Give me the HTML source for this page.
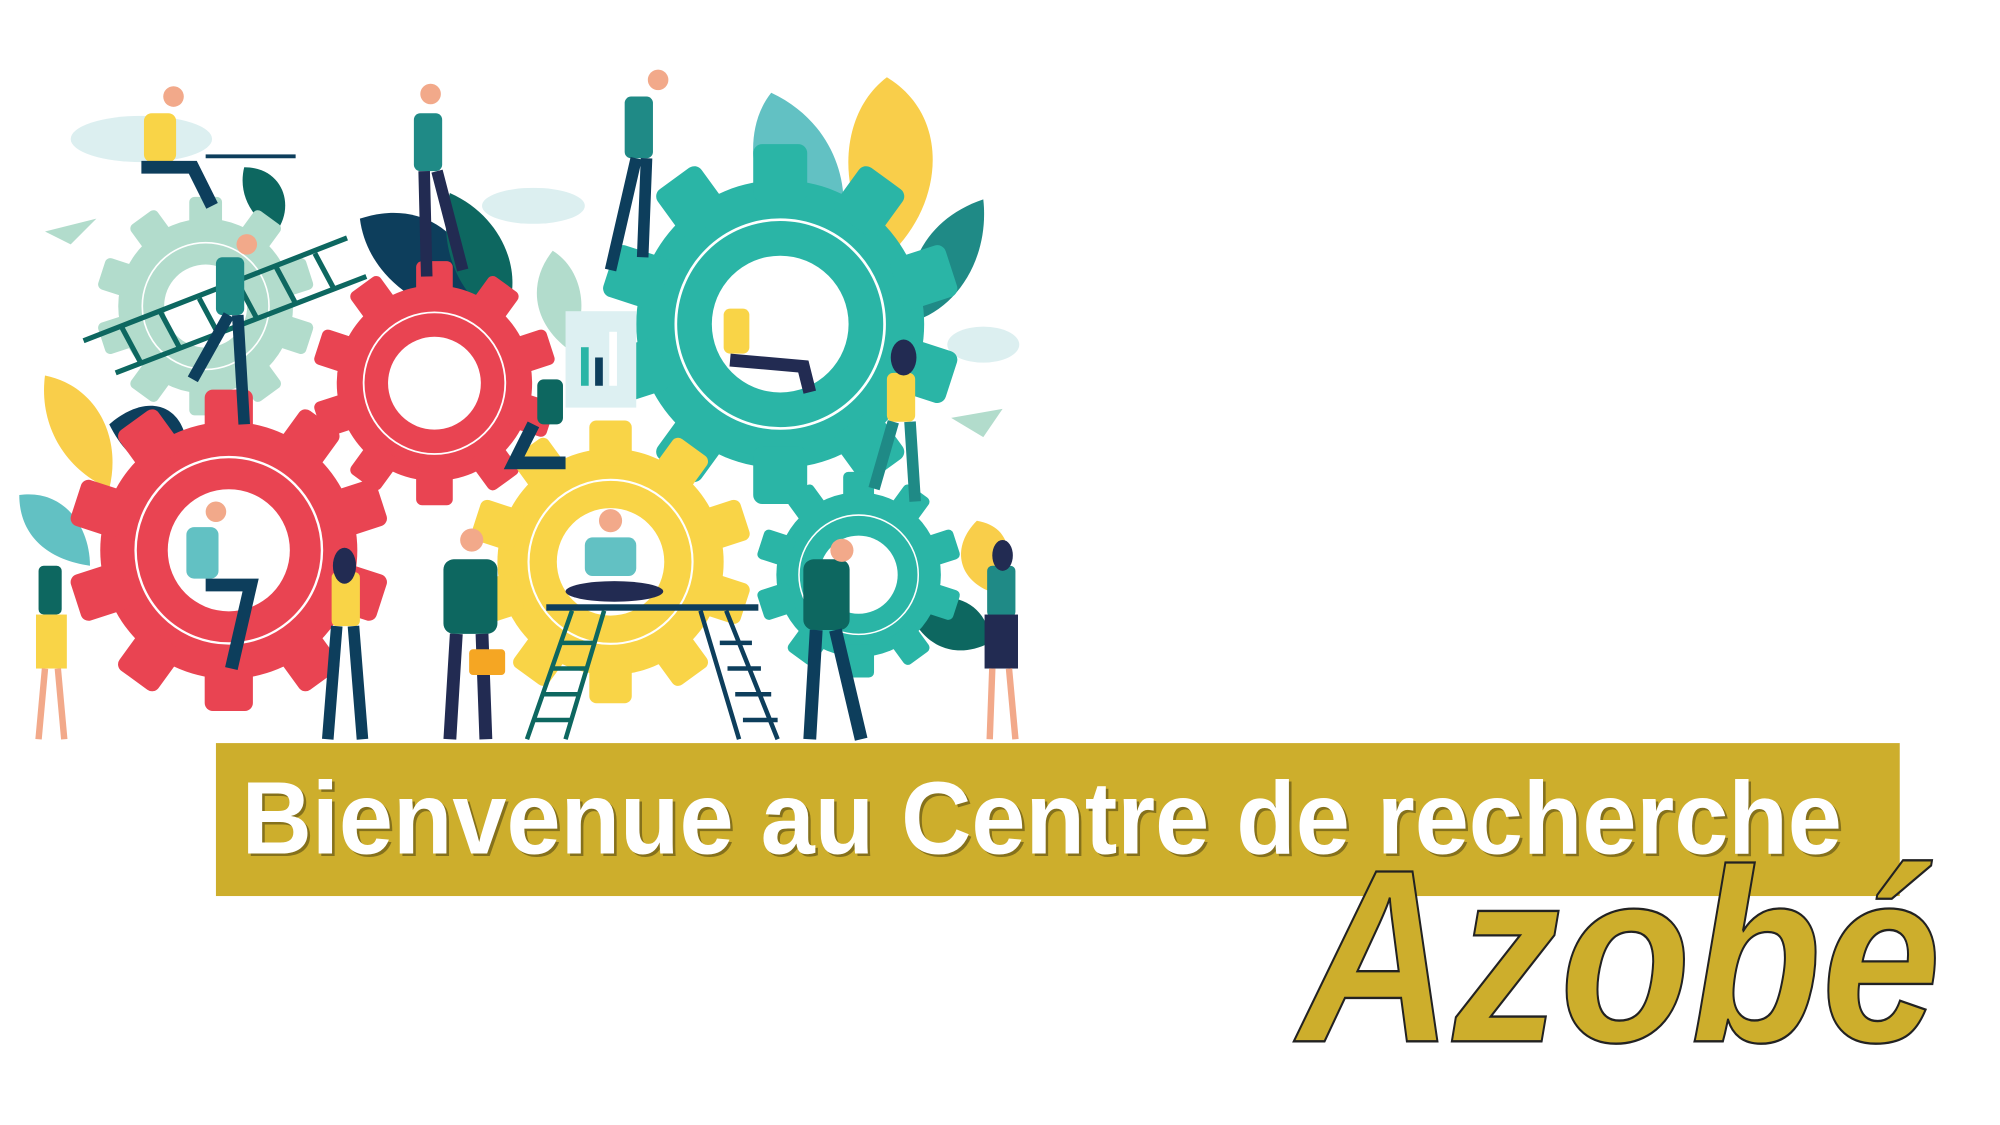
<!DOCTYPE html>
<html><head><meta charset="utf-8"><style>
html,body{margin:0;padding:0;background:#fff;width:2000px;height:1125px;overflow:hidden}
svg{display:block}
</style></head><body>
<svg width="2000" height="1125" viewBox="0 0 1556 875" xmlns="http://www.w3.org/2000/svg">
<defs>
<g id="g">
<circle r="80"/>
<rect x="-15" y="-100" width="30" height="32" rx="5"/>
<rect x="-15" y="-100" width="30" height="32" rx="5" transform="rotate(36)"/>
<rect x="-15" y="-100" width="30" height="32" rx="5" transform="rotate(72)"/>
<rect x="-15" y="-100" width="30" height="32" rx="5" transform="rotate(108)"/>
<rect x="-15" y="-100" width="30" height="32" rx="5" transform="rotate(144)"/>
<rect x="-15" y="-100" width="30" height="32" rx="5" transform="rotate(180)"/>
<rect x="-15" y="-100" width="30" height="32" rx="5" transform="rotate(216)"/>
<rect x="-15" y="-100" width="30" height="32" rx="5" transform="rotate(252)"/>
<rect x="-15" y="-100" width="30" height="32" rx="5" transform="rotate(288)"/>
<rect x="-15" y="-100" width="30" height="32" rx="5" transform="rotate(324)"/>
<circle r="58" fill="none" stroke="#fff" stroke-width="1.5"/>
<circle r="38" fill="#fff"/>
</g>
</defs>
<ellipse cx="110" cy="108" rx="55" ry="18" fill="#DCEFF0"/>
<ellipse cx="415" cy="160" rx="40" ry="14" fill="#DCEFF0"/>
<ellipse cx="765" cy="268" rx="28" ry="14" fill="#DCEFF0"/>
<path d="M690 60 C740 90 735 160 690 200 C650 160 650 90 690 60Z" fill="#F9CE4A"/>
<path d="M600 72 C660 100 670 170 640 210 C590 180 570 110 600 72Z" fill="#62C1C3"/>
<path d="M765 155 C770 200 745 240 710 250 C700 210 720 170 765 155Z" fill="#1F8A86"/>
<path d="M280 170 C340 150 380 200 370 250 C320 240 285 210 280 170Z" fill="#0D3E5C"/>
<path d="M350 150 C395 170 410 220 390 250 C355 230 340 190 350 150Z" fill="#0D6760"/>
<path d="M35 292 C75 300 95 340 85 380 C50 365 30 330 35 292Z" fill="#F9CE4A"/>
<path d="M15 385 C50 380 70 410 70 440 C35 435 15 415 15 385Z" fill="#62C1C3"/>
<path d="M85 330 C120 300 150 320 145 360 C120 370 100 360 85 330Z" fill="#0D3E5C"/>
<path d="M430 195 C455 210 460 250 440 270 C415 250 410 220 430 195Z" fill="#B2DCCC"/>
<path d="M760 405 C790 410 790 440 770 460 C745 450 740 425 760 405Z" fill="#F9CE4A"/>
<path d="M705 470 C740 455 770 470 770 500 C740 515 715 500 705 470Z" fill="#0D6760"/>
<path d="M190 130 C220 130 230 160 215 180 C195 170 185 150 190 130Z" fill="#0D6760"/>
<use href="#g" transform="translate(160,238) scale(0.85)" fill="#B2DCCC"/>
<use href="#g" transform="translate(338,298) scale(0.95)" fill="#E94452"/>
<use href="#g" transform="translate(607,252) scale(1.4)" fill="#2AB5A6"/>
<use href="#g" transform="translate(178,428) scale(1.25)" fill="#E94452"/>
<use href="#g" transform="translate(475,437) scale(1.1)" fill="#F9D447"/>
<use href="#g" transform="translate(668,447) scale(0.8)" fill="#2AB5A6"/>
<g stroke="#0D6760" stroke-width="4">
<line x1="65" y1="265" x2="270" y2="185"/><line x1="90" y1="290" x2="285" y2="215"/>
<line x1="95" y1="255" x2="110" y2="283"/><line x1="125" y1="243" x2="140" y2="271"/>
<line x1="155" y1="232" x2="170" y2="260"/><line x1="185" y1="220" x2="200" y2="248"/>
<line x1="215" y1="208" x2="230" y2="236"/><line x1="245" y1="197" x2="260" y2="225"/>
</g>
<rect x="440" y="242" width="55" height="75" fill="#DDF0F2"/>
<rect x="452" y="270" width="6" height="30" fill="#2AB5A6"/><rect x="463" y="278" width="6" height="22" fill="#0D3E5C"/><rect x="474" y="258" width="6" height="42" fill="#fff"/>
<rect x="425" y="470" width="165" height="5" fill="#0D3E5C"/>
<g stroke="#0D6760" stroke-width="3.5" fill="none">
<path d="M445 475 L410 575 M470 475 L440 575 M415 560 L445 560 M422 540 L450 540 M429 520 L456 520 M436 500 L462 500"/>
</g>
<g stroke="#0D3E5C" stroke-width="3.5" fill="none">
<path d="M545 475 L575 575 M565 475 L605 575 M560 500 L585 500 M566 520 L592 520 M572 540 L600 540 M578 560 L605 560"/>
</g>
<g>
<rect x="112" y="88" width="25" height="38" rx="6" fill="#F9D447"/><circle cx="135" cy="75" r="8" fill="#F2A98A"/><path d="M110 130 L150 130 L165 160" stroke="#0D3E5C" stroke-width="10" fill="none"/>
<rect x="160" y="120" width="70" height="3" fill="#0D3E5C"/>
<rect x="322" y="88" width="22" height="45" rx="5" fill="#1F8A86"/><circle cx="335" cy="73" r="8" fill="#F2A98A"/><path d="M330 133 L332 215 M340 133 L360 210" stroke="#222B52" stroke-width="9"/>
<rect x="486" y="75" width="22" height="48" rx="5" fill="#1F8A86"/><circle cx="512" cy="62" r="8" fill="#F2A98A"/><path d="M495 123 L475 210 M503 123 L500 200" stroke="#0D3E5C" stroke-width="9"/>
<rect x="168" y="200" width="22" height="45" rx="5" fill="#1F8A86"/><circle cx="192" cy="190" r="8" fill="#F2A98A"/><path d="M178 245 L150 295 M185 245 L190 330" stroke="#0D3E5C" stroke-width="9"/>
<rect x="563" y="240" width="20" height="35" rx="5" fill="#F9D447"/><path d="M568 280 L625 285 L630 305" stroke="#222B52" stroke-width="10" fill="none"/>
<rect x="690" y="290" width="22" height="38" rx="5" fill="#F9D447"/><ellipse cx="703" cy="278" rx="10" ry="14" fill="#222B52"/><path d="M695 328 L680 380 M708 328 L712 390" stroke="#1F8A86" stroke-width="9"/>
<rect x="418" y="295" width="20" height="35" rx="5" fill="#0D6760"/><path d="M415 330 L400 360 L440 360" stroke="#0D3E5C" stroke-width="10" fill="none"/>
<rect x="145" y="410" width="25" height="40" rx="6" fill="#62C1C3"/><circle cx="168" cy="398" r="8" fill="#F2A98A"/><path d="M160 455 L195 455 L180 520" stroke="#0D3E5C" stroke-width="10" fill="none"/>
<rect x="455" y="418" width="40" height="30" rx="6" fill="#62C1C3"/><circle cx="475" cy="405" r="9" fill="#F2A98A"/><ellipse cx="478" cy="460" rx="38" ry="8" fill="#222B52"/>
<rect x="30" y="440" width="18" height="38" rx="4" fill="#0D6760"/><rect x="28" y="478" width="24" height="42" fill="#F9D447"/><path d="M35 520 L30 575 M45 520 L50 575" stroke="#F2A98A" stroke-width="5"/>
<rect x="258" y="445" width="22" height="42" rx="4" fill="#F9D447"/><path d="M262 487 L255 575 M275 487 L282 575" stroke="#0D3E5C" stroke-width="9"/><ellipse cx="268" cy="440" rx="9" ry="14" fill="#222B52"/>
<rect x="345" y="435" width="42" height="58" rx="8" fill="#0D6760"/><circle cx="367" cy="420" r="9" fill="#F2A98A"/><path d="M355 493 L350 575 M375 493 L378 575" stroke="#222B52" stroke-width="10"/><rect x="365" y="505" width="28" height="20" rx="3" fill="#F5A623"/>
<rect x="625" y="435" width="36" height="55" rx="8" fill="#0D6760"/><circle cx="655" cy="428" r="9" fill="#F2A98A"/><path d="M635 490 L630 575 M650 490 L670 575" stroke="#0D3E5C" stroke-width="10"/>
<rect x="768" y="440" width="22" height="40" rx="4" fill="#1F8A86"/><rect x="766" y="478" width="26" height="42" fill="#222B52"/><path d="M772 520 L770 575 M785 520 L790 575" stroke="#F2A98A" stroke-width="5"/><ellipse cx="780" cy="432" rx="8" ry="12" fill="#222B52"/>
</g>
<path d="M35 180 L75 170 L55 190Z" fill="#B2DCCC"/><path d="M740 325 L780 318 L765 340Z" fill="#B2DCCC"/>
<rect x="168" y="578" width="1310" height="119" fill="#CDAE2C"/>
<text x="190" y="666" font-family="Liberation Sans, sans-serif" font-weight="bold" font-size="80" fill="#000" fill-opacity="0.35" textLength="1245" lengthAdjust="spacingAndGlyphs">Bienvenue au Centre de recherche</text>
<text x="188" y="664" font-family="Liberation Sans, sans-serif" font-weight="bold" font-size="80" fill="#fff" textLength="1245" lengthAdjust="spacingAndGlyphs">Bienvenue au Centre de recherche</text>
<g transform="translate(1010,810) scale(1,1.5)">
<text x="0" y="0" font-family="Liberation Sans, sans-serif" font-weight="bold" font-style="italic" font-size="128" fill="#CDAE2C" stroke="#222" stroke-width="1.2" textLength="500" lengthAdjust="spacingAndGlyphs">Azobé</text>
</g>
</svg>
</body></html>
